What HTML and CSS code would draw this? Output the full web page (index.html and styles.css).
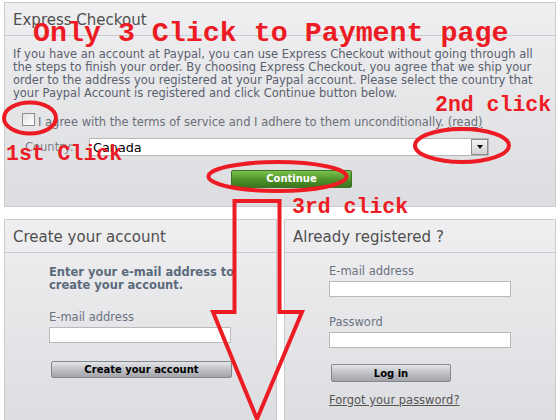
FILE: index.html
```html
<!DOCTYPE html>
<html lang="en">

<head>
    <meta charset="UTF-8">
    <title>Express Checkout</title>
    <link rel="stylesheet" href="styles.css">
</head>

<body>
    <div class="page">
        <div class="panel checkout">
            <div class="panel-head">Express Checkout</div>
            <div class="checkout-body">
                <p class="intro">If you have an account at Paypal, you can use Express Checkout without going through all
                    the steps to finish your order. By choosing Express Checkout, you agree that we ship your
                    order to the address you registered at your Paypal account. Please select the country that
                    your Paypal Account is registered and click Continue button below.</p>

                <label class="agree">
                    <input type="checkbox" class="check">
                    <span>I agree with the terms of service and I adhere to them unconditionally. <a href="#">(read)</a></span>
                </label>

                <div class="country-row">
                    <span class="country-label">Country:</span>
                    <div class="select">
                        <span>Canada</span>
                        <span class="select-arrow"><span class="caret"></span></span>
                    </div>
                </div>

                <div class="continue-row">
                    <button class="btn-continue">Continue</button>
                </div>
            </div>
        </div>

        <div class="columns">
            <div class="panel">
                <div class="panel-head">Create your account</div>
                <div class="panel-body">
                    <p class="lead">Enter your e-mail address to create your account.</p>
                    <label class="field-label">E-mail address</label>
                    <input type="text" class="field">
                    <button class="btn-gray btn-create">Create your account</button>
                </div>
            </div>

            <div class="panel">
                <div class="panel-head">Already registered ?</div>
                <div class="panel-body login">
                    <label class="field-label">E-mail address</label>
                    <input type="text" class="field">
                    <label class="field-label">Password</label>
                    <input type="password" class="field">
                    <button class="btn-gray btn-login">Log in</button>
                    <a href="#" class="forgot">Forgot your password?</a>
                </div>
            </div>
        </div>

        <!-- red notes drawn over the screenshot -->
        <svg class="notes" width="557" height="420" viewBox="0 0 557 420">
            <g fill="none" stroke="#ed1c24" stroke-width="4">
                <ellipse cx="30" cy="118" rx="26" ry="15.5" />
                <ellipse cx="462" cy="145.5" rx="47" ry="16.5" />
                <ellipse cx="277.5" cy="176.5" rx="69" ry="14.5" />
                <polygon points="234.5,201 279.5,201 279.5,312 302,312 257,419 213,312 234.5,312" />
            </g>
            <g class="note-text">
                <text x="33" y="41" font-size="28.3">Only 3 Click to Payment page</text>
                <text x="435" y="111" font-size="21.5">2nd click</text>
                <text x="6" y="160" font-size="21.5">1st Click</text>
                <text x="292" y="213" font-size="21.5">3rd click</text>
            </g>
        </svg>
    </div>
</body>

</html>
```

FILE: styles.css
```css
body {
    margin: 0;
    background-color: #ffffff;
    font-family: "DejaVu Sans", Verdana, sans-serif;
    color: #5a616e;
    overflow: hidden;
}

.page {
    position: relative;
    width: 552px;
    height: 418px;
    padding: 2px 0 0 4px;
    overflow: hidden;
}

.panel {
    border: 1px solid #c9cacd;
    background: linear-gradient(#efeff1, #dcdde0);
    box-sizing: border-box;
}

.checkout {
    height: 205px;
}

.panel-head {
    height: 30px;
    padding: 2px 8px 0;
    border-bottom: 1px solid #c9cacd;
    font-size: 15px;
    line-height: 30px;
    color: #4f4f4f;
}

.checkout-body {
    padding: 0 8px;
}

.intro {
    margin: 12px 0 0;
    font-size: 11.5px;
    line-height: 13px;
}

.agree {
    display: flex;
    align-items: flex-start;
    margin-top: 13px;
    padding-left: 9px;
    font-size: 11.5px;
    line-height: 13px;
    color: #6a6f78;
}

.agree span {
    margin-top: 3px;
}

.agree a {
    color: #6a6f78;
}

.check {
    appearance: none;
    width: 13px;
    height: 13px;
    margin: 0 3px 0 0;
    border: 1px solid #8c8c8c;
    background: linear-gradient(135deg, #e4e4e4, #ffffff);
    box-sizing: border-box;
}

.country-row {
    display: flex;
    align-items: flex-end;
    margin-top: 9px;
    padding-left: 12px;
}

.country-label {
    width: 64px;
    font-size: 11.5px;
    line-height: 13px;
    margin-bottom: 2px;
    color: #7a7f88;
}

.select {
    display: flex;
    justify-content: space-between;
    align-items: center;
    width: 400px;
    height: 18px;
    box-sizing: border-box;
    padding-left: 3px;
    border: 1px solid #b7b7b7;
    background-color: #ffffff;
    font-size: 12.8px;
    color: #000000;
}

.select-arrow {
    display: flex;
    align-items: center;
    justify-content: center;
    width: 17px;
    height: 16px;
    box-sizing: border-box;
    border: 1px solid #8d8d8d;
    background: linear-gradient(#f4f4f4, #d2d2d2);
}

.caret {
    border-left: 3.5px solid transparent;
    border-right: 3.5px solid transparent;
    border-top: 4px solid #000000;
}

.continue-row {
    margin-top: 11px;
    padding-left: 218px;
}

.btn-continue {
    width: 121px;
    height: 18px;
    padding: 0;
    border: 1px solid #3f7225;
    border-radius: 2px;
    background: linear-gradient(#7cc24d, #4d9229 55%, #3b761d);
    font-family: "DejaVu Sans", Verdana, sans-serif;
    font-size: 10px;
    font-weight: bold;
    color: #ffffff;
}

.columns {
    display: grid;
    grid-template-columns: 273px 272px;
    gap: 7px;
    margin-top: 12px;
}

.columns .panel {
    height: 210px;
}

.panel-body {
    display: flex;
    flex-direction: column;
    align-items: flex-start;
    padding: 13px 30px 0 44px;
}

.panel-body.login {
    padding-top: 12px;
}

.lead {
    margin: 0;
    font-size: 11.5px;
    line-height: 13px;
    font-weight: bold;
    color: #5b6a7b;
}

.field-label {
    margin-top: 19px;
    font-size: 11.5px;
    line-height: 13px;
    color: #6b7382;
}

.login .field-label:first-child {
    margin-top: 0;
}

.field {
    width: 182px;
    height: 16px;
    margin-top: 3px;
    padding: 0;
    border: 1px solid #b9b9bc;
    background-color: #ffffff;
    box-sizing: border-box;
}

.btn-gray {
    height: 17px;
    margin: 18px 0 0 2px;
    padding: 0;
    border: 1px solid #86888d;
    border-radius: 2px;
    background: linear-gradient(#e4e5e8, #b9bbc0 60%, #a3a5ab);
    font-family: "DejaVu Sans", Verdana, sans-serif;
    font-size: 10px;
    font-weight: bold;
    color: #000000;
}

.btn-create {
    width: 181px;
}

.btn-login {
    width: 120px;
    height: 18px;
    margin-top: 16px;
}

.forgot {
    margin-top: 12px;
    font-size: 11.5px;
    line-height: 13px;
    color: #555555;
}

.notes {
    position: absolute;
    top: 0;
    left: 0;
    pointer-events: none;
}

.note-text {
    font-family: "Liberation Mono", "Courier New", monospace;
    font-weight: bold;
    fill: #ed1c24;
}
```
